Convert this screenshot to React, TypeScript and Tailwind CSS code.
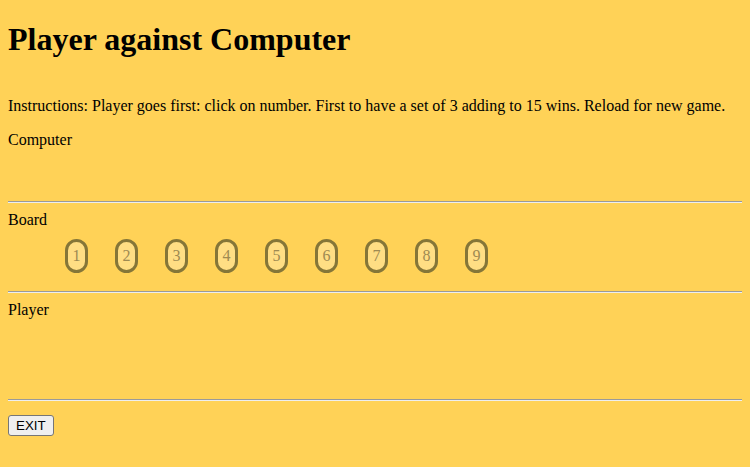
const NUMBERS = [1, 2, 3, 4, 5, 6, 7, 8, 9];

function Rule() {
  return <div className="h-[2px] border-t border-t-[#9a9a9a] border-b border-b-[#eeeeee]" />;
}

export default function App() {
  return (
    <div className="min-h-[467px] bg-[#ffd257] px-2 pt-[21px] font-['Liberation_Serif',serif] text-black text-[16px] leading-[18px]">
      <h1 className="text-[32px] leading-[37px] font-bold">Player against Computer</h1>

      <p className="mt-[39px]">
        Instructions: Player goes first: click on number. First to have a set of 3 adding to 15 wins. Reload for new game.
      </p>
      <p className="mt-4">Computer</p>

      <div className="mt-[52px]">
        <Rule />
      </div>

      <div className="mt-2">Board</div>
      <div className="mt-[10px] ml-[57px] flex gap-[27px]">
        {NUMBERS.map((n) => (
          <div
            key={n}
            className="w-[23px] h-[34px] rounded-[12px] border-[3px] border-[#857638] bg-[#ffde84] flex items-center justify-center text-[#9e8a52] text-[16px]"
          >
            {n}
          </div>
        ))}
      </div>

      <div className="mt-[18px]">
        <Rule />
      </div>
      <div className="mt-2">Player</div>

      <div className="mt-[80px]">
        <Rule />
      </div>

      <button className="mt-[14px] h-[21px] px-[7px] bg-[#efefef] border border-[#767676] rounded-[3px] font-['Liberation_Sans',sans-serif] text-[13.33px] leading-[15px] text-black">
        EXIT
      </button>
    </div>
  );
}
